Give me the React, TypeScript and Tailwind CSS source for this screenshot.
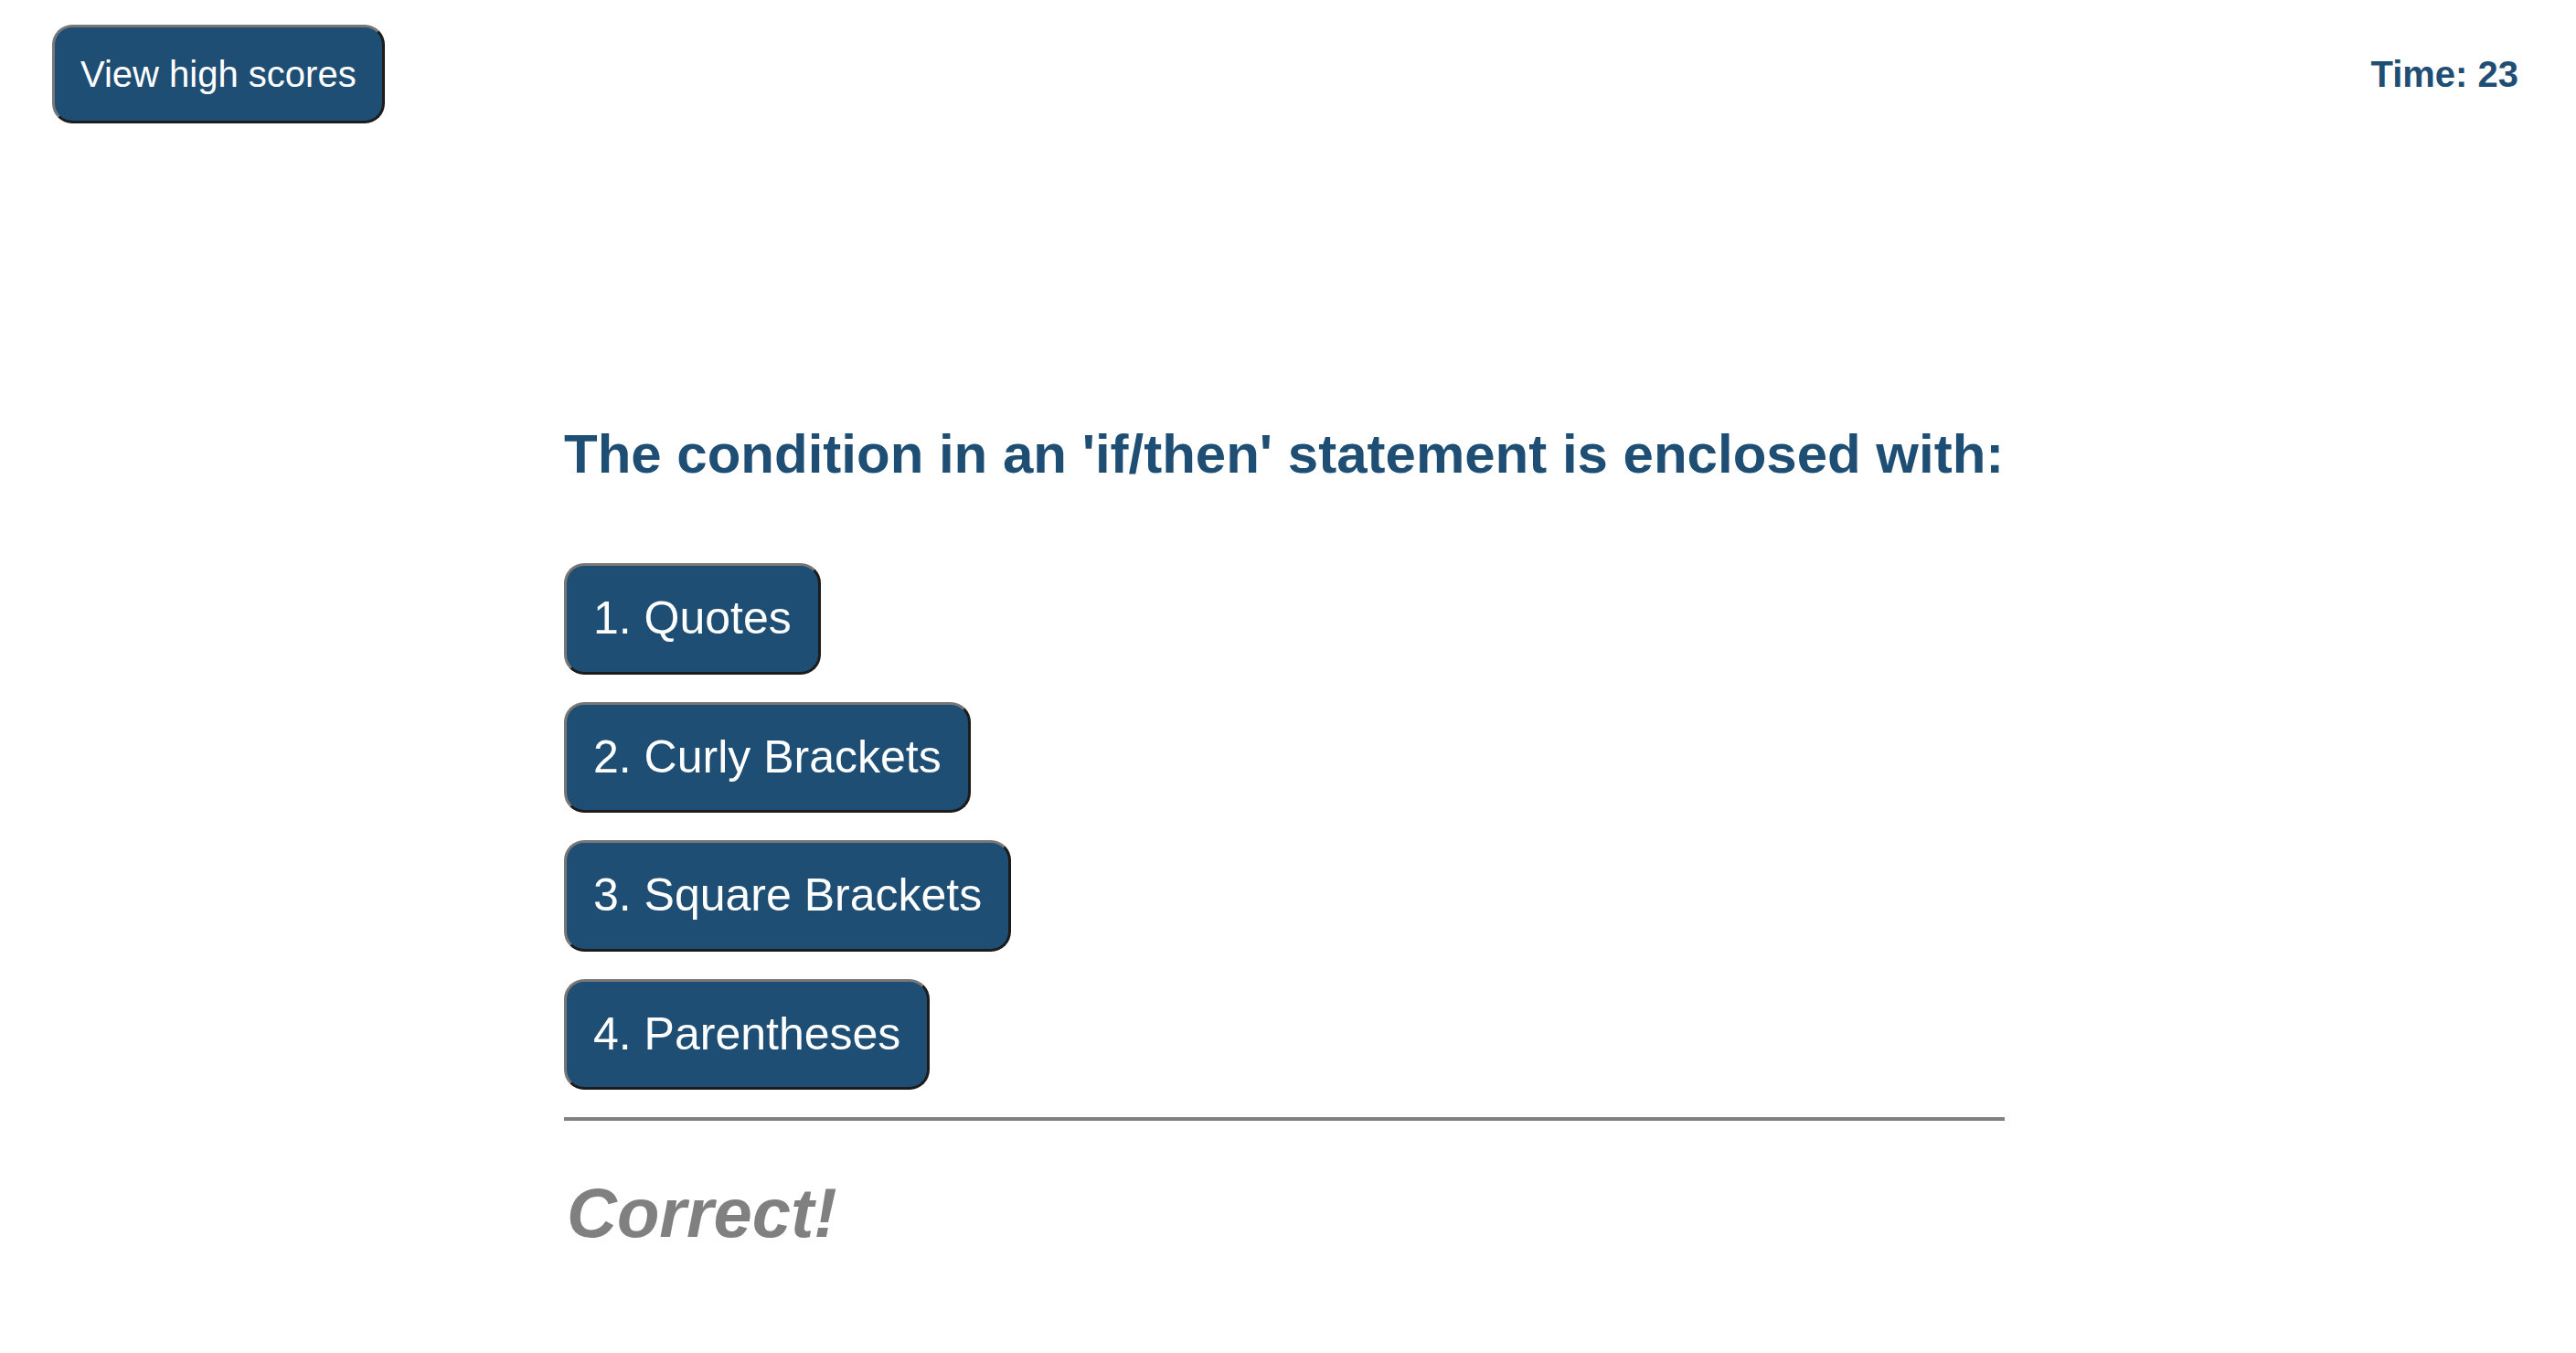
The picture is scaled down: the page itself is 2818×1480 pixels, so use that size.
import React from "react";

const font = { fontFamily: '"Liberation Sans", Arial, Helvetica, sans-serif' };

const btn =
  "bg-[#1f4e74] text-white border-[3px] border-solid border-t-[#777777] border-l-[#777777] border-r-[#1c1c1c] border-b-[#1c1c1c] rounded-[22px] leading-[1.15]";

export default function App() {
  const answers = ["1. Quotes", "2. Curly Brackets", "3. Square Brackets", "4. Parentheses"];
  return (
    <div className="min-h-screen bg-white font-['Liberation_Sans',Arial,sans-serif]" style={font}>
      <header className="flex items-center justify-between pl-[57px] pr-[63px] pt-[27px]">
        <button className={`${btn} text-[40px] p-[28px]`}>View high scores</button>
        <div className="text-[40px] font-bold text-[#1f4e74]">Time: 23</div>
      </header>
      <main className="w-[1576px] ml-[617px] mt-[327px] flex flex-col">
        <h2 className="text-[60px] font-bold text-[#1f4e74] leading-[1.15]">
          The condition in an 'if/then' statement is enclosed with:
        </h2>
        <div className="flex flex-col items-start gap-[30px] mt-[85px]">
          {answers.map((a) => (
            <button key={a} className={`${btn} text-[50px] px-[29px] py-[29px]`}>
              {a}
            </button>
          ))}
        </div>
        <div className="h-[4px] bg-[#808080] mt-[30px]" />
        <div className="mt-[57px] text-[76px] font-bold italic text-[#808080] leading-[1.15] pl-[3px]">
          Correct!
        </div>
      </main>
    </div>
  );
}
